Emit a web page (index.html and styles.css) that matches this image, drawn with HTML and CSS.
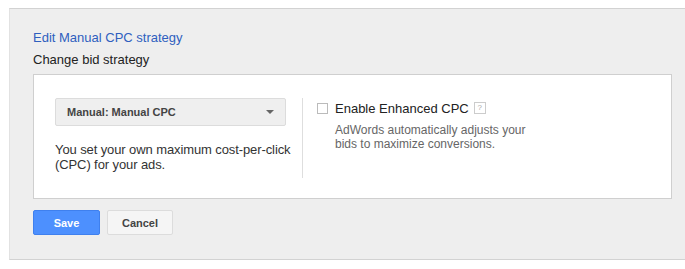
FILE: index.html
```html
<!DOCTYPE html>
<html lang="en">
<head>
    <meta charset="UTF-8">
    <title>Edit Manual CPC strategy</title>
    <link rel="stylesheet" href="styles.css">
</head>
<body>
    <div class="panel">
        <a class="panel-title" href="#">Edit Manual CPC strategy</a>
        <div class="panel-sub">Change bid strategy</div>

        <div class="strategy-box">
            <div class="strategy-left">
                <div class="select">
                    <span>Manual: Manual CPC</span>
                    <span class="select-arrow"></span>
                </div>
                <p class="strategy-desc">You set your own maximum cost-per-click<br>(CPC) for your ads.</p>
            </div>
            <div class="strategy-right">
                <label class="check-row">
                    <span class="checkbox"></span>
                    <span>Enable Enhanced CPC</span>
                    <span class="help">?</span>
                </label>
                <p class="check-desc">AdWords automatically adjusts your<br>bids to maximize conversions.</p>
            </div>
        </div>

        <div class="actions">
            <button class="btn btn-save">Save</button>
            <button class="btn btn-cancel">Cancel</button>
        </div>
    </div>
</body>
</html>
```

FILE: styles.css
```css
* {
    margin: 0;
    padding: 0;
    box-sizing: border-box;
}

body {
    font-family: "Liberation Sans", Arial, sans-serif;
    background: #fff;
    color: #333;
}

/* Outer panel */
.panel {
    margin: 8px 0 0 9px;
    height: 252px;
    background: #eeeeee;
    border-top: 1px solid #d2d2d2;
    border-left: 1px solid #e2e2e2;
    border-bottom: 1px solid #d2d2d2;
    padding: 20px 12px 0 23px;
}

.panel-title {
    display: block;
    font-size: 13px;
    line-height: 18px;
    color: #2f5fbf;
    text-decoration: none;
}

.panel-sub {
    font-size: 13px;
    line-height: 18px;
    margin-top: 4px;
    color: #222;
}

/* White strategy box */
.strategy-box {
    margin-top: 5px;
    width: 639px;
    height: 125px;
    background: #fff;
    border: 1px solid #cfcfcf;
    display: flex;
    padding: 23px 0 0 21px;
}

.strategy-left {
    width: 231px;
}

.select {
    height: 28px;
    background: #efefef;
    border: 1px solid #dcdcdc;
    border-radius: 2px;
    display: flex;
    align-items: center;
    justify-content: space-between;
    padding: 0 11px 0 11px;
    font-size: 11px;
    font-weight: bold;
    color: #444;
}

.select-arrow {
    width: 0;
    height: 0;
    border-left: 4px solid transparent;
    border-right: 4px solid transparent;
    border-top: 4px solid #666;
}

.strategy-desc {
    margin-top: 16px;
    font-size: 13px;
    line-height: 15px;
    color: #333;
    white-space: nowrap;
    letter-spacing: -0.1px;
}

.strategy-right {
    margin-left: 16px;
    height: 80px;
    border-left: 1px solid #dedede;
    padding-left: 14px;
}

.check-row {
    display: flex;
    align-items: center;
    height: 20px;
    font-size: 13px;
    color: #222;
}

.checkbox {
    width: 11px;
    height: 11px;
    border: 1px solid #bbb;
    margin-right: 7px;
}

.help {
    margin-left: 5px;
    width: 12px;
    height: 12px;
    border: 1px solid #ccc;
    font-size: 8px;
    line-height: 10px;
    text-align: center;
    color: #aaa;
}

.check-desc {
    margin-top: 5px;
    margin-left: 18px;
    font-size: 12px;
    line-height: 14px;
    color: #666;
}

/* Buttons */
.actions {
    margin-top: 11px;
    display: flex;
    gap: 7px;
}

.btn {
    height: 25px;
    font-family: "Liberation Sans", Arial, sans-serif;
    font-size: 11px;
    font-weight: bold;
    border-radius: 2px;
    cursor: pointer;
}

.btn-save {
    width: 67px;
    background: #4d90fe;
    border: 1px solid #3f80ee;
    color: #fff;
}

.btn-cancel {
    width: 66px;
    background: #f5f5f5;
    border: 1px solid #dcdcdc;
    color: #444;
}
```
